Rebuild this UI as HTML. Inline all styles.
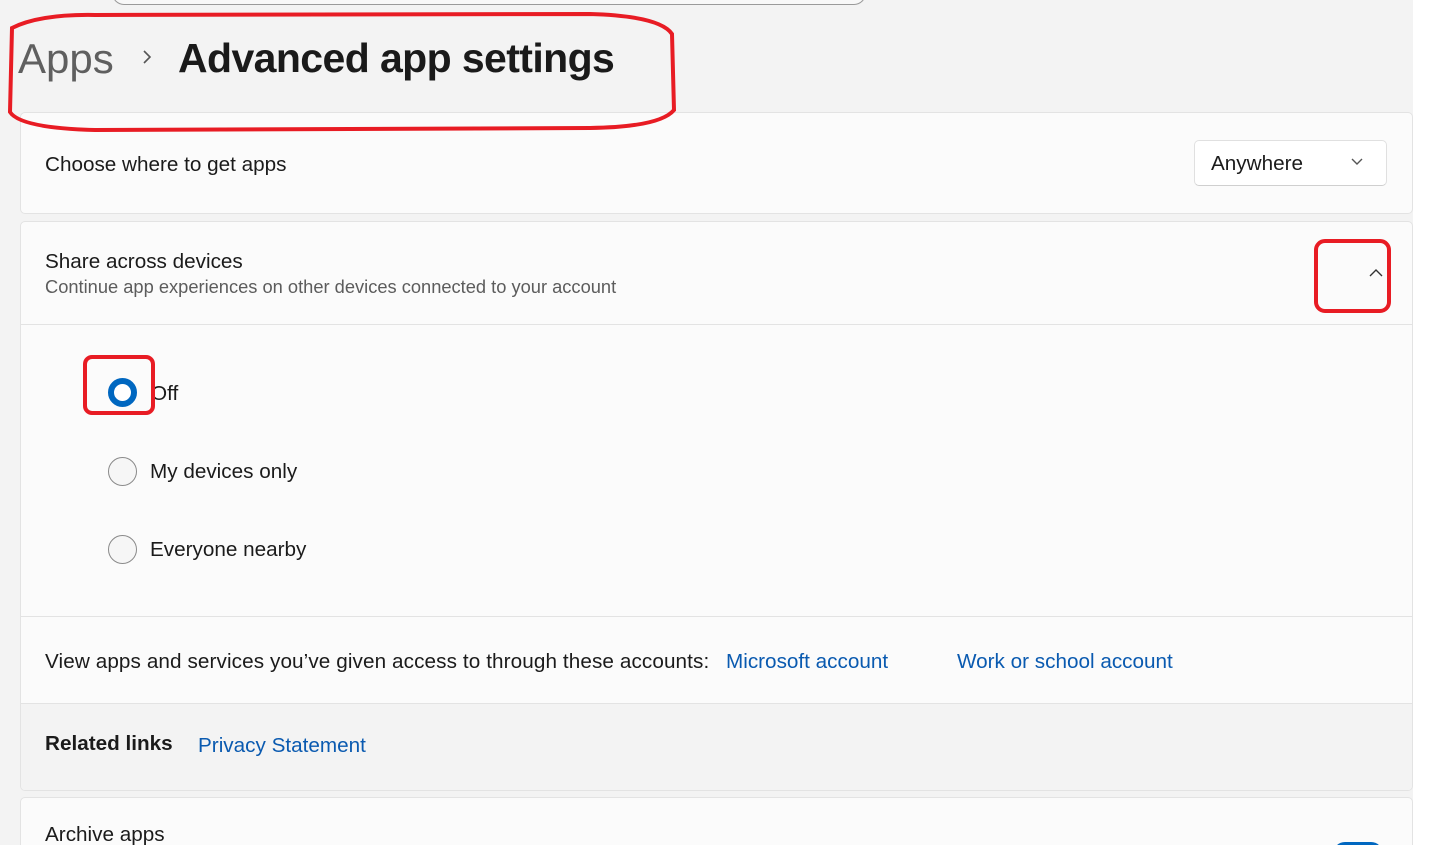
<!DOCTYPE html>
<html style="height:845px;overflow:hidden"><head><meta charset="utf-8"><style>
body{margin:0;width:1440px;height:845px;overflow:hidden;background:#fff;font-family:"Segoe UI","Liberation Sans",sans-serif;color:#1b1b1b;position:relative}
.bg{position:absolute;left:0;top:0;width:1413px;height:845px;background:#f3f3f3}
.a{position:absolute;white-space:nowrap}
.card{position:absolute;left:20px;width:1391px;background:#fbfbfb;border:1px solid #e3e3e3;border-radius:5px}
.t{font-size:20.7px}
.link{color:#0a5ab0;font-size:20.7px}
.radio{position:absolute;width:29px;height:29px;border-radius:50%;box-sizing:border-box;border:1.5px solid #8a8a8a;background:#f6f6f6}
</style></head><body>
<div class="bg"></div>
<div class="a" style="left:112px;top:-20px;width:752px;height:24px;border:1.5px solid #9a9a9a;border-top:none;border-radius:0 0 12px 12px;background:#f8f8f8"></div>
<div class="a" style="left:18px;top:35px;font-size:42px;color:#5f5f5f;letter-spacing:0px">Apps</div>
<svg class="a" style="left:140px;top:48px" width="14" height="18"><path d="M4 3 L10 9 L4 15" fill="none" stroke="#555" stroke-width="1.6"/></svg>
<div class="a" style="left:178px;top:35px;font-size:41px;font-weight:600;color:#1a1a1a;letter-spacing:-0.6px">Advanced app settings</div>

<div class="card" style="top:112px;height:100px"></div>
<div class="a t" style="left:45px;top:153px">Choose where to get apps</div>
<div class="a" style="left:1194px;top:140px;width:193px;height:46px;background:#fff;border:1px solid #e0e0e0;border-bottom-color:#cfcfcf;border-radius:5px;box-sizing:border-box"></div>
<div class="a t" style="left:1211px;top:152px">Anywhere</div>
<svg class="a" style="left:1350px;top:157px" width="14" height="10"><path d="M2 2 L7 7 L12 2" fill="none" stroke="#555" stroke-width="1.4"/></svg>

<div class="card" style="top:221px;height:568px;overflow:hidden">
 <div style="position:absolute;left:0;top:102px;width:100%;height:1px;background:#e3e3e3"></div>
 <div style="position:absolute;left:0;top:394px;width:100%;height:1px;background:#e3e3e3"></div>
 <div style="position:absolute;left:0;top:481px;width:100%;height:90px;background:#f3f3f3;border-top:1px solid #e3e3e3"></div>
</div>
<div class="a t" style="left:45px;top:250px">Share across devices</div>
<div class="a" style="left:45px;top:276px;font-size:18.3px;color:#5c5c5c">Continue app experiences on other devices connected to your account</div>
<svg class="a" style="left:1368px;top:267px" width="16" height="11"><path d="M2 9 L8 3 L14 9" fill="none" stroke="#333" stroke-width="1.4"/></svg>

<div class="radio" style="left:108px;top:378px;border:6.5px solid #0067c0;background:#fff"></div>
<div class="a t" style="left:151px;top:382px">Off</div>
<div class="radio" style="left:108px;top:457px"></div>
<div class="a t" style="left:150px;top:460px">My devices only</div>
<div class="radio" style="left:108px;top:535px"></div>
<div class="a t" style="left:150px;top:538px">Everyone nearby</div>

<div class="a t" style="left:45px;top:650px;letter-spacing:0.1px">View apps and services you’ve given access to through these accounts:</div>
<div class="a link" style="left:726px;top:650px">Microsoft account</div>
<div class="a link" style="left:957px;top:650px">Work or school account</div>
<div class="a t" style="left:45px;top:732px;font-weight:600">Related links</div>
<div class="a link" style="left:198px;top:734px">Privacy Statement</div>

<div class="card" style="top:797px;height:80px"></div>
<div class="a t" style="left:45px;top:823px">Archive apps</div>
<div class="a" style="left:1333px;top:842px;width:50px;height:24px;border-radius:12px;background:#0067c0"></div>

<svg class="a" style="left:0;top:0" width="1440" height="845">
<g fill="none" stroke="#e81c24" stroke-width="4">
<path d="M12 28 Q40 14 95 15 L590 14 Q660 16 672 34 L674 110 Q660 127 590 128 L95 130 Q20 128 10 112 Z"/>
<rect x="1316" y="241" width="73" height="70" rx="9"/>
<rect x="85" y="357" width="68" height="56" rx="7"/>
</g></svg>
</body></html>
